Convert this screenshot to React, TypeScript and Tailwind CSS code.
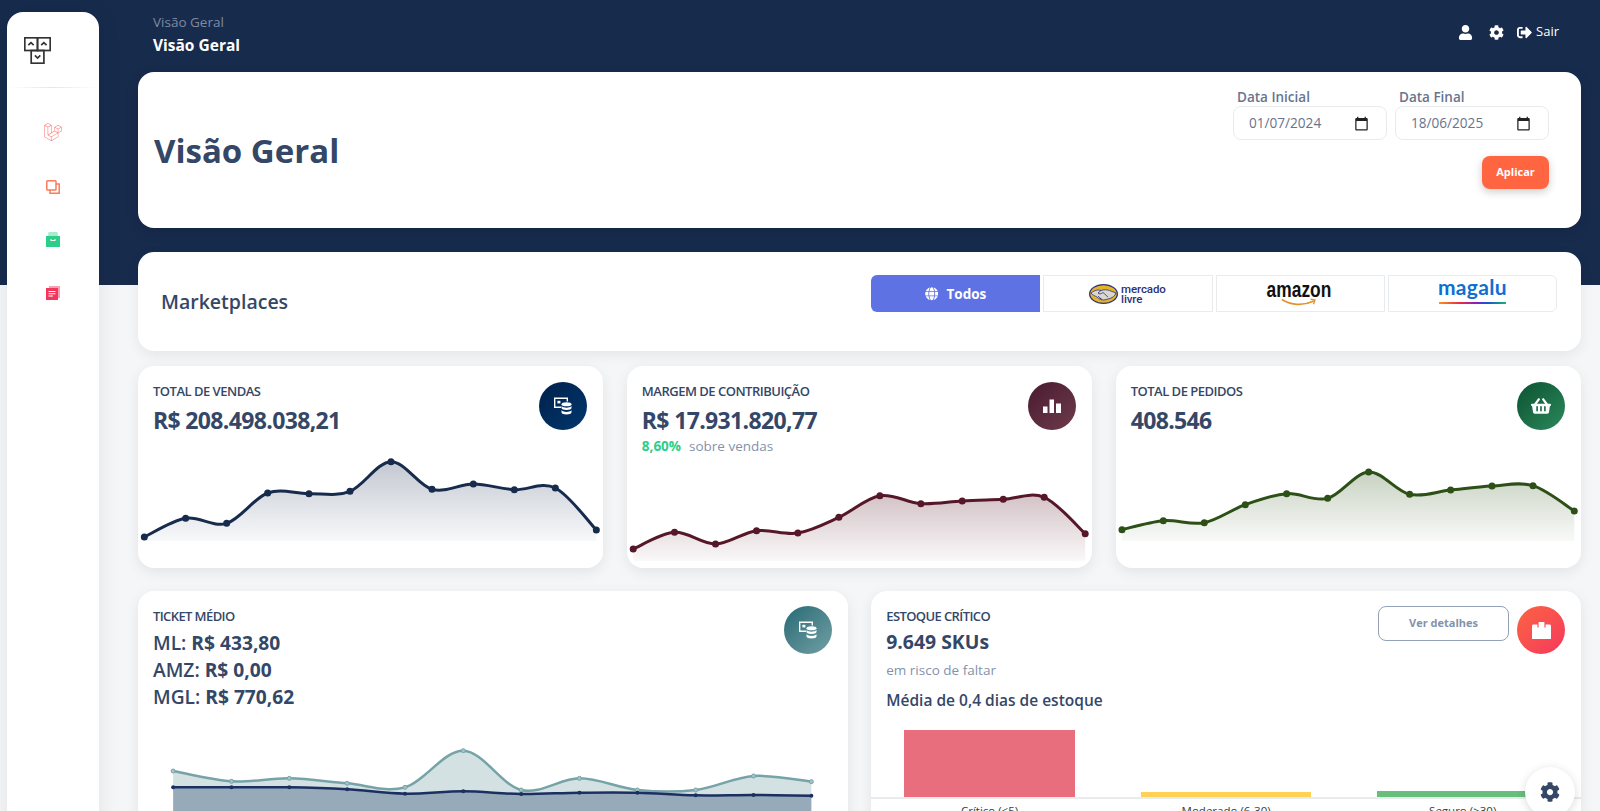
import { FaCog, FaGlobe, FaShoppingBasket, FaSignOutAlt, FaUser } from "react-icons/fa";
import { SiLaravel } from "react-icons/si";

type Pt = [number, number];

const font = "[font-family:'Open_Sans',sans-serif]";

// smooth line through the points, same kind of curve as the chart lib
function smooth(pts: Pt[]) {
  let d = `M${pts[0][0]} ${pts[0][1]}`;
  for (let i = 0; i < pts.length - 1; i++) {
    const p0 = pts[i - 1] || pts[i];
    const p1 = pts[i];
    const p2 = pts[i + 1];
    const p3 = pts[i + 2] || p2;
    const c1x = p1[0] + (p2[0] - p0[0]) / 6;
    const c1y = p1[1] + (p2[1] - p0[1]) / 6;
    const c2x = p2[0] - (p3[0] - p1[0]) / 6;
    const c2y = p2[1] - (p3[1] - p1[1]) / 6;
    d += ` C${c1x} ${c1y} ${c2x} ${c2y} ${p2[0]} ${p2[1]}`;
  }
  return d;
}

function Spark({ id, color, xs, ys, x0, x1, base }: { id: string; color: string; xs: number[]; ys: number[]; x0: number; x1: number; base: number }) {
  // xs, ys come in zoomed page pixels (3x), chart box starts at y 456 and is 112 tall
  const pts: Pt[] = xs.map((x, i) => [x0 + x / 3 - x1, 360 + ys[i] / 3 - 456]);
  const line = smooth(pts);
  const b = base - 456;
  return (
    <svg viewBox="0 0 465.33 112" className="block w-full h-[112px] mt-auto">
      <defs>
        <linearGradient id={id} x1="0" y1="0" x2="0" y2="1">
          <stop offset="0" stopColor={color} stopOpacity="0.26" />
          <stop offset="1" stopColor={color} stopOpacity="0.03" />
        </linearGradient>
      </defs>
      <path d={`${line} L${pts[pts.length - 1][0]} ${b} L${pts[0][0]} ${b} Z`} fill={`url(#${id})`} />
      <path d={line} fill="none" stroke={color} strokeWidth="3" />
      {pts.map((p, i) => (
        <circle key={i} cx={p[0]} cy={p[1]} r="3.5" fill={color} />
      ))}
    </svg>
  );
}

function CoinsIcon({ size = 18 }: { size?: number }) {
  return (
    <svg width={size} height={size} viewBox="0 0 18 18" fill="white">
      <path d="M0 0.5h14v4h-1.4V2H1.4v7.5H7V11H0z" />
      <rect x="3.4" y="3.8" width="3" height="2.6" />
      <ellipse cx="12.5" cy="7.2" rx="5" ry="2" />
      <path d="M7.5 9c1 1.2 3 1.7 5 1.7s4-.5 5-1.7v2c0 1.2-2.2 2-5 2s-5-.8-5-2z" />
      <path d="M7.5 13.2c1 1.2 3 1.7 5 1.7s4-.5 5-1.7v2.3c0 1.2-2.2 2-5 2s-5-.8-5-2z" />
    </svg>
  );
}

function Circle({ className, children }: { className: string; children: React.ReactNode }) {
  return <div className={`w-12 h-12 rounded-full flex items-center justify-center shrink-0 ${className}`}>{children}</div>;
}

function DateBox({ label, value }: { label: string; value: string }) {
  return (
    <div className="w-[154px]">
      <div className="pl-1 text-[13.500px] leading-[18px] font-semibold text-[#67748e]">{label}</div>
      <div className="h-[34px] border border-[#e9ecef] rounded-lg bg-white flex items-center justify-between pl-[15px] pr-[17px] text-[13.600px] text-[#67748e]">
        <span>{value}</span>
        <svg width="15" height="15" viewBox="0 0 24 24" fill="#222">
          <path d="M20 3h-1V1h-2v2H7V1H5v2H4c-1.1 0-2 .9-2 2v16c0 1.1.9 2 2 2h16c1.1 0 2-.9 2-2V5c0-1.1-.9-2-2-2zm0 18H4V8h16v13z" />
        </svg>
      </div>
    </div>
  );
}

function Sidebar() {
  return (
    <aside className="w-[92px] ml-[7px] mt-3 h-[900px] shrink-0 bg-white rounded-t-2xl shadow-[0_0_24px_rgba(0,0,0,0.08)]">
      <div className="h-[75px] pt-[25px] pl-[17px]">
        <svg width="27" height="27" viewBox="0 0 27 27" fill="none" stroke="#333" strokeWidth="1.700">
          <rect x="0.8" y="0.8" width="12.7" height="12.7" />
          <rect x="13.5" y="0.8" width="12.7" height="12.7" />
          <rect x="7.2" y="13.5" width="12.7" height="12.7" />
          <path d="M4.3 8.2 7 5.6l2.7 2.6M17.2 8.2l2.7-2.6 2.7 2.6M10.9 18.4l2.7 2.6 2.7-2.6" />
        </svg>
      </div>
      <div className="h-px bg-gradient-to-r from-transparent via-[#e4e6ea] to-transparent" />
      <div className="flex flex-col items-center pt-[35px] pr-[1px]">
        <SiLaravel className="w-[18px] h-[18px] text-[#f57a7a]" />
        <svg width="14" height="14" viewBox="0 0 14 14" fill="none" stroke="#ff7a59" strokeWidth="1.500" className="mt-[39px]">
          <rect x="0.8" y="0.8" width="9.2" height="9.2" rx="0.8" />
          <path d="M10 4h3.200v9.200H4V10" />
        </svg>
        <svg width="14" height="15" viewBox="0 0 14 15" className="mt-[38px]">
          <path d="M2.500 0h9l.5 4H2z" fill="#a8eccd" />
          <path d="M0 4h14v11H0z" fill="#2dce89" />
          <path d="M4.500 7h1v1h3V7h1v2h-5z" fill="#fff" />
        </svg>
        <svg width="14" height="14" viewBox="0 0 14 14" className="mt-[39px]">
          <path d="M3 0h11v12h-2V2H3z" fill="#f9a0b4" />
          <path d="M0 2h12v12H0z" fill="#f5365c" />
          <path d="M2.500 5h7v1h-7zM2.500 7.200h7v1h-7zM2.500 9.400h4.500v1h-4.500z" fill="#fff" />
        </svg>
      </div>
    </aside>
  );
}

function Header() {
  return (
    <header className="h-[72px] flex justify-between pl-[15px] pr-[22px] text-white">
      <div className="pt-[12px]">
        <div className="text-[13.500px] leading-[21px] text-[#7f8aa0]">Visão Geral</div>
        <div className="text-[15.500px] leading-[22px] mt-[1px] font-bold">Visão Geral</div>
      </div>
      <div className="flex items-center h-[64px]">
        <FaUser className="w-[15px] h-[15px]" />
        <FaCog className="w-[15px] h-[15px] ml-[16px]" />
        <div className="flex items-center gap-[4px] text-[13px] ml-[13px]">
          <FaSignOutAlt className="w-[15px] h-[15px]" />
          <span>Sair</span>
        </div>
      </div>
    </header>
  );
}

function MercadoLogo() {
  return (
    <div className="flex items-center gap-[3px] -ml-[1px]">
      <svg width="29" height="20" viewBox="0 0 29 20">
        <ellipse cx="14.500" cy="10" rx="14.500" ry="10" fill="#2d3277" />
        <ellipse cx="14.500" cy="10" rx="13.200" ry="8.700" fill="#e3b32a" />
        <path d="M2 9c4-3 7-3.500 10-2.500 3-1 6-1 8.500 0L27 9c-1 3-3.500 5-8 6l-4 1c-3 0-5-1-7-3-2-1-4.500-2-6-4z" fill="#d9d7cf" stroke="#2d3277" strokeWidth="0.8" />
        <path d="M12 6.500 9 9c1 1.500 3 1 5-.5l5 4.500M11 14l2 1.500M9 12l3 3" fill="none" stroke="#2d3277" strokeWidth="0.8" />
      </svg>
      <div className="[font-family:Roboto,sans-serif] font-medium text-[#2d3277] text-[11.500px] leading-[10px] -tracking-[0.1px]">
        <div>mercado</div>
        <div>livre</div>
      </div>
    </div>
  );
}

function AmazonLogo() {
  return (
    <div className="flex flex-col items-center -mt-[1px] -ml-[2px]">
      <span className="[font-family:'Liberation_Sans',sans-serif] font-bold text-[#111] text-[22px] leading-[19px] inline-block scale-x-[0.79]">amazon</span>
      <svg width="36" height="9" viewBox="0 0 36 9" fill="none" stroke="#e4932a" strokeWidth="1.700" className="-mt-[1px]">
        <path d="M1 1.500c9 6 21 6.500 32 1.500" />
        <path d="M29.500 1.200 34 2l-1.500 4.300" strokeWidth="1.300" />
      </svg>
    </div>
  );
}

function MagaluLogo() {
  return (
    <div className="flex flex-col items-center -mt-[7px]">
      <span className="[font-family:Lato,sans-serif] font-bold text-[#0f6fcf] text-[21px] leading-[22px] tracking-[0.3px]">magalu</span>
      <div className="w-[67px] h-[2.500px] mt-[3.500px] bg-[linear-gradient(90deg,#f7941d,#ee2d3d_30%,#8a1fc2_55%,#1b4fd6_72%,#12b76a)]" />
    </div>
  );
}

function Marketplaces() {
  const box = "h-[37px] bg-white border border-[#e9ecef] flex items-center justify-center";
  return (
    <section className="h-[99px] mt-[24px] bg-white rounded-2xl shadow-[0_4px_14px_rgba(0,0,0,0.07)] flex justify-between pl-[23px] pr-[24px]">
      <h2 className="self-center text-[19.500px] font-semibold text-[#344767]">Marketplaces</h2>
      <div className="mt-[23px] w-[686px] h-[37px] grid grid-cols-4 gap-[3px]">
        <div className="h-[37px] pt-[1px] bg-[#5e72e4] rounded-l-md flex items-center justify-center gap-[8px] text-white text-[13.500px] font-bold">
          <FaGlobe className="w-[13.500px] h-[13.500px]" />
          Todos
        </div>
        <div className={box}><MercadoLogo /></div>
        <div className={box}><AmazonLogo /></div>
        <div className={`${box} rounded-r-md`}><MagaluLogo /></div>
      </div>
    </section>
  );
}

function StatCard({ title, value, icon, extra, chart }: { title: string; value: string; icon: React.ReactNode; extra?: React.ReactNode; chart: React.ReactNode }) {
  return (
    <div className="h-[202px] bg-white rounded-2xl shadow-[0_4px_14px_rgba(0,0,0,0.08)] flex flex-col overflow-hidden">
      <div className="flex justify-between pl-[15px] pr-4 pt-[16px]">
        <div>
          <div className="text-[13px] leading-[18px] font-semibold -tracking-[0.5px] text-[#344767]">{title}</div>
          <div className="text-[23px] leading-[30px] mt-[5px] font-bold -tracking-[0.65px] text-[#344767]">{value}</div>
          {extra}
        </div>
        {icon}
      </div>
      {chart}
    </div>
  );
}

function TicketCard() {
  const xs = [94, 221, 347, 473, 599, 726, 852, 979, 1105, 1232, 1358, 1484];
  const teal = [573, 604, 595, 610, 622, 512, 630, 595, 630, 630, 588, 605];
  const navy = [622, 622, 622, 628, 641, 634, 642, 638, 638, 646, 645, 647];
  const toPts = (ys: number[]): Pt[] => xs.map((x, i) => [130 + x / 2.178 - 138, 580 + ys[i] / 3 - 740]);
  const t = toPts(teal);
  const n = toPts(navy);
  const area = (p: Pt[]) => `${smooth(p)} L${p[p.length - 1][0]} 160 L${p[0][0]} 160 Z`;
  return (
    <div className="h-[340px] bg-white rounded-2xl shadow-[0_4px_14px_rgba(0,0,0,0.08)] overflow-hidden">
      <div className="h-[149px] flex justify-between pl-[15px] pr-4 pt-[15px] text-[#344767]">
        <div>
          <div className="mt-[1px] text-[13px] leading-[18px] font-semibold -tracking-[0.6px]">TICKET MÉDIO</div>
          <div className="mt-[4px] text-[19.200px] leading-[27px] font-semibold">ML: <b className="font-bold">R$ 433,80</b></div>
          <div className="text-[19.200px] leading-[27px] font-semibold">AMZ: <b className="font-bold">R$ 0,00</b></div>
          <div className="text-[19.200px] leading-[27px] font-semibold">MGL: <b className="font-bold">R$ 770,62</b></div>
        </div>
        <Circle className="bg-gradient-to-br from-[#256b75] to-[#729fa5]"><CoinsIcon /></Circle>
      </div>
      <svg viewBox="0 0 709.750 160" className="block w-full h-[160px]">
        <path d={area(t)} fill="#75a3a8" fillOpacity="0.32" />
        <path d={area(n)} fill="#1b3a66" fillOpacity="0.33" />
        <path d={smooth(t)} fill="none" stroke="#75a3a8" strokeWidth="2.500" />
        <path d={smooth(n)} fill="none" stroke="#1b2f60" strokeWidth="2.500" />
        {t.map((p, i) => <circle key={i} cx={p[0]} cy={p[1]} r="2" fill="#a5c4c8" stroke="#75a3a8" />)}
        {n.map((p, i) => <circle key={i} cx={p[0]} cy={p[1]} r="2" fill="#1b2f60" />)}
      </svg>
    </div>
  );
}

function StockCard() {
  const bars = [
    { h: "h-[67px]", c: "bg-[#e96e7d]", l: "Crítico (≤5)" },
    { h: "h-[5px]", c: "bg-[#ffd154]", l: "Moderado (6-30)" },
    { h: "h-[6px]", c: "bg-[#66bf7a]", l: "Seguro (>30)" },
  ];
  return (
    <div className="h-[340px] bg-white rounded-2xl shadow-[0_4px_14px_rgba(0,0,0,0.08)] overflow-hidden">
      <div className="h-[139px] flex justify-between pl-[15px] pr-4 pt-[15px] text-[#344767]">
        <div>
          <div className="mt-[1px] text-[13px] leading-[18px] font-semibold -tracking-[0.6px]">ESTOQUE CRÍTICO</div>
          <div className="mt-[3px] text-[19.400px] leading-[27px] font-bold">9.649 SKUs</div>
          <div className="mt-[2px] text-[13.500px] leading-[26px] text-[#8392ab]">em risco de faltar</div>
          <div className="mt-[4px] text-[15.500px] leading-[26px] font-semibold">Média de 0,4 dias de estoque</div>
        </div>
        <div className="flex gap-2">
          <div className="w-[131px] h-[35px] border-[1.5px] border-[#94a1b8] rounded-lg flex items-center justify-center text-[11px] font-bold text-[#8392ab]">Ver detalhes</div>
          <Circle className="bg-gradient-to-br from-[#fb6340] to-[#f5365c]">
            <svg width="19" height="17" viewBox="0 0 19 17" fill="white">
              <path d="M1.500 2.500H6V0h7v2.500h4.500c.8 0 1.500.6 1.500 1.500v13H0V4c0-.9.7-1.500 1.500-1.500z" />
              <path d="M6 0v5.500M13 0v5.500" stroke="#f8505a" strokeWidth="1.200" fill="none" />
            </svg>
          </Circle>
        </div>
      </div>
      <div className="h-[69px] px-[33px] grid grid-cols-3 gap-[66px] items-end border-b-2 border-[#e9ecef]">
        {bars.map((b) => (
          <div key={b.l} className={`${b.h} ${b.c}`} />
        ))}
      </div>
      <div className="px-[33px] grid grid-cols-3 gap-[66px] pt-[4px] text-[11.500px] leading-[16px] text-center text-[#373d3f]">
        {bars.map((b) => (
          <div key={b.l}>{b.l}</div>
        ))}
      </div>
    </div>
  );
}

export default function App() {
  return (
    <div className={`${font} relative h-[811px] overflow-hidden flex bg-[linear-gradient(#172b4d_285px,#f5f6f8_285px)]`}>
      <Sidebar />
      <main className="flex-1 min-w-0 ml-[39px] mr-[19px]">
        <Header />
        <section className="h-[156px] bg-white rounded-2xl shadow-[0_4px_14px_rgba(0,0,0,0.12)] flex justify-between items-start pl-4 pr-8">
          <h1 className="self-center pt-[2px] text-[33px] leading-[48px] font-bold text-[#344767]">Visão Geral</h1>
          <div className="pt-[16px]">
            <div className="flex gap-2">
              <DateBox label="Data Inicial" value="01/07/2024" />
              <DateBox label="Data Final" value="18/06/2025" />
            </div>
            <div className="flex justify-end mt-4">
              <div className="w-[67px] h-[33px] rounded-lg bg-[#ff6540] text-white text-[11px] font-bold flex items-center justify-center shadow-[0_3px_8px_rgba(0,0,0,0.2)]">Aplicar</div>
            </div>
          </div>
        </section>
        <Marketplaces />
        <div className="grid grid-cols-3 gap-[23.500px] mt-[15px]">
          <StatCard
            title="TOTAL DE VENDAS"
            value="R$ 208.498.038,21"
            icon={<Circle className="bg-gradient-to-br from-[#00214a] to-[#00376e]"><CoinsIcon /></Circle>}
            chart={<Spark id="a" color="#172b4d" x0={130} x1={138} base={541} xs={[43, 167, 290, 413, 537, 660, 783, 906, 1030, 1153, 1276, 1399]} ys={[531, 475, 490, 399, 401, 394, 305, 388, 372, 389, 384, 510]} />}
          />
          <StatCard
            title="MARGEM DE CONTRIBUIÇÃO"
            value="R$ 17.931.820,77"
            extra={
              <div className="text-[13.500px] leading-[18px] mt-[2px] text-[#8392ab]">
                <b className="font-bold text-[#2dce89]">8,60%</b>
                <span className="ml-2">sobre vendas</span>
              </div>
            }
            icon={
              <Circle className="bg-gradient-to-br from-[#4a1a30] to-[#6d3b4b]">
                <svg width="18" height="18" viewBox="0 0 18 18" fill="white">
                  <path d="M0 9.500h4.500V16H0zM6.500 2.500H11V16H6.500zM13 6.500h5V16h-5z" />
                </svg>
              </Circle>
            }
            chart={<Spark id="b" color="#561729" x0={610} x1={626.8} base={561} xs={[69, 193, 316, 439, 563, 686, 809, 932, 1056, 1179, 1302, 1425]} ys={[567, 517, 552, 512, 519, 472, 407, 431, 423, 418, 412, 521]} />}
          />
          <StatCard
            title="TOTAL DE PEDIDOS"
            value="408.546"
            icon={<Circle className="bg-gradient-to-br from-[#0c5232] to-[#2b8a5c]"><FaShoppingBasket className="w-[20px] h-[20px] text-white" /></Circle>}
            chart={<Spark id="c" color="#2c5016" x0={1090} x1={1115.7} base={541} xs={[95, 219, 342, 465, 589, 712, 835, 958, 1081, 1205, 1328, 1452]} ys={[509, 482, 488, 434, 401, 415, 336, 403, 390, 378, 377, 453]} />}
          />
        </div>
        <div className="grid grid-cols-2 gap-[23.500px] mt-[23px]">
          <TicketCard />
          <StockCard />
        </div>
      </main>
      <button className="absolute left-[1525px] top-[767px] w-[50px] h-[50px] rounded-full bg-white shadow-[0_2px_10px_rgba(0,0,0,0.15)] flex items-center justify-center">
        <FaCog className="w-[20px] h-[20px] text-[#344767]" />
      </button>
    </div>
  );
}
